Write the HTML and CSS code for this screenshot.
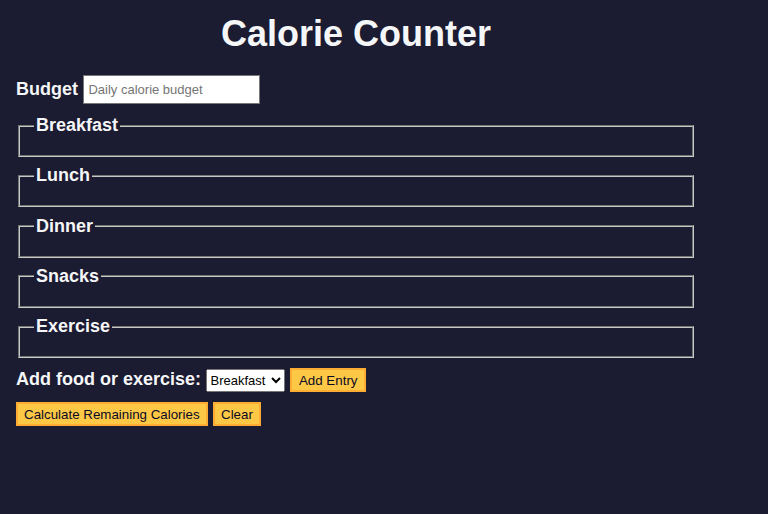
FILE: index.html
```html
<!DOCTYPE html>
<html lang="en">
<head>
    <meta charset="UTF-8">
    <meta name="viewport" content="width=device-width, initial-scale=1.0">
    <title>Calorie Counter</title>
    <link rel="stylesheet" href="styles.css">
</head>
<body>
    <main>
        <h1>Calorie Counter</h1>
        <div class="container">
            <form id="calorie-counter">
                <label for="budget">Budget</label>
                <input type="number" min="0" id="budget" placeholder="Daily calorie budget" required>
                <fieldset id="breakfast">
                    <legend>Breakfast</legend>
                    <div class="input-container"></div>
                </fieldset>
                <fieldset id="lunch">
                    <legend>Lunch</legend>
                    <div class="input-container"></div>
                </fieldset>
                <fieldset id="dinner">
                    <legend>Dinner</legend>
                    <div class="input-container"></div>
                </fieldset>
                <fieldset id="snacks">
                    <legend>Snacks</legend>
                    <div class="input-container"></div>
                </fieldset>
                <fieldset id="exercise">
                    <legend>Exercise</legend>
                    <div class="input-container"></div>
                </fieldset>
                <div class="controls">
                    <span>
                        <label for="entry-dropdown">Add food or exercise:</label>
                        <select id="entry-dropdown" name="options">
                            <option value="breakfast" selected>Breakfast</option>
                            <option value="lunch">Lunch</option>
                            <option value="dinner">Dinner</option>
                            <option value="snacks">Snacks</option>
                            <option value="exercise">Exercise</option>
                        </select>
                        <button type="button" id="add-entry">Add Entry</button>
                    </span>
                </div>
                <div>
                    <button type="submit">Calculate Remaining Calories</button>
                    <button type="button" id="clear">Clear</button>
                </div>
            </form>
            <div id="output" class="output hide"></div>
        </div>
    </main>
</body>
</html>
```

FILE: styles.css
```css
:root {
    --light-grey: #f5f6f7;
    --dark-blue: #1b1b32;
    --orange: #feac32;
}

body {
    margin: 0;
    padding: 8px;
    font-family: "Liberation Sans", Arial, sans-serif;
    background-color: var(--dark-blue);
    color: var(--light-grey);
    min-height: 514px;
    box-sizing: border-box;
}

main {
    width: 680px;
    padding: 0 8px;
}

h1 {
    text-align: center;
    font-size: 36px;
    margin: 5px 0 20px;
}

label,
legend {
    font-weight: bold;
    font-size: 18px;
}

#budget {
    width: 177px;
    height: 29px;
    box-sizing: border-box;
    margin: 0 0 0 1px;
    padding: 2px 4px;
    font-family: "Liberation Sans", Arial, sans-serif;
    font-size: 13px;
    border: 1px solid #767676;
    vertical-align: middle;
}

#budget::placeholder {
    color: #757575;
}

form > label {
    vertical-align: middle;
}

fieldset {
    margin: 8.25px 2px 0;
    padding: 0 14px;
    height: 42px;
    box-sizing: border-box;
    border: 2px groove #c8c8c8;
}

#breakfast {
    margin-top: 11px;
}

legend {
    padding: 0 2px;
    line-height: 21px;
}

.controls {
    margin: 10px 0 10px;
}

.controls label {
    vertical-align: middle;
}

select {
    font-family: "Liberation Sans", Arial, sans-serif;
    font-size: 13px;
    width: 79px;
    height: 23px;
    margin-left: 0;
    vertical-align: middle;
}

button {
    font-family: "Liberation Sans", Arial, sans-serif;
    font-size: 13.33px;
    color: #0a0a23;
    background-color: #fec847;
    border: 2px solid var(--orange);
    height: 24px;
    padding: 0 6px;
    margin-right: 1px;
    vertical-align: middle;
    cursor: pointer;
}

#add-entry {
    margin-left: 1px;
    padding: 0 7px;
}

.hide {
    display: none;
}
```
